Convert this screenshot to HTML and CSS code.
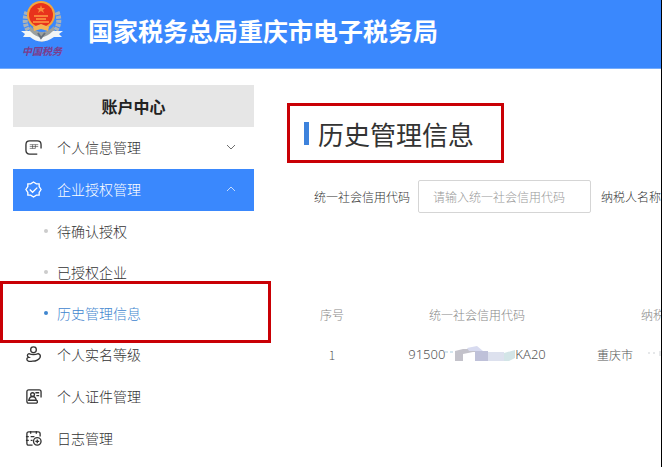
FILE: index.html
```html
<!DOCTYPE html>
<html lang="zh-CN">

<head>
    <meta charset="UTF-8">
    <meta name="viewport" content="width=device-width, initial-scale=1.0">
    <title>历史管理信息</title>
    <link rel="stylesheet" href="styles.css">
</head>

<body>
    <div class="page">
        <header class="header">
            <div class="logo">
                <svg width="44" height="44" viewBox="0 0 44 44" aria-hidden="true">
                    <path d="M7 12 Q2 24 11 34 M37 12 Q42 24 33 34" fill="none" stroke="#a9b2b8" stroke-width="5" stroke-dasharray="3 1" />
                    <path d="M10 26 Q22 38 34 26 L34 36 L22 42 L10 36 Z" fill="#9aa0a0" />
                    <circle cx="21" cy="15" r="14" fill="#f5a53c" />
                    <circle cx="21" cy="15" r="12" fill="#e8321c" />
                    <path d="M21 5 l1 3 h3 l-2 2 1 3 -3-2 -3 2 1-3 -2-2 h3z" fill="#f98a3a" />
                    <path d="M14 16 h14 M16 19 h10 M13 22 h16" stroke="#f9823a" stroke-width="2" />
                    <path d="M13 27 L21 24 L29 27 L28 31 L21 29 L14 31 Z" fill="#f3b455" />
                    <path d="M1 31 L10 31 Q21 43 33 31 L43 31 L39 34 L42 37 L34 37 Q21 46 10 37 L3 37 L5 34 Z" fill="#f2f5f6" />
                    <path d="M18 33 L21 38 L25 33" fill="none" stroke="#68717c" stroke-width="2" />
                </svg>
                <span class="logo-text">中国税务</span>
            </div>
            <h1 class="site-name">国家税务总局重庆市电子税务局</h1>
        </header>

        <div class="content">
            <nav class="sidebar">
                <h2 class="sidebar-title">账户中心</h2>
                <ul class="menu">
                    <li>
                        <button type="button" class="menu-item">
                            <svg class="icon" viewBox="0 0 18 18">
                                <path d="M13 16 H5 Q1 16 1 12 V6 Q1 2 5 2 H13 Q17 2 17 6 V10" />
                                <path class="thin" d="M5 6 H14 M5 8 H14 M5 10 H11 M8 6 V10 M11 6 V10" />
                            </svg>
                            <span>个人信息管理</span>
                            <svg class="arrow" viewBox="0 0 10 6"><path d="M1 1 L5 5 L9 1" /></svg>
                        </button>
                    </li>
                    <li>
                        <button type="button" class="menu-item active">
                            <svg class="icon" viewBox="0 0 18 18">
                                <path d="M9 1 L12 3 L15 3 L15 6 L17 9 L15 12 L15 15 L12 15 L9 17 L6 15 L3 15 L3 12 L1 9 L3 6 L3 3 L6 3 Z" />
                                <path d="M5 9 L8 12 L13 7" />
                            </svg>
                            <span>企业授权管理</span>
                            <svg class="arrow" viewBox="0 0 10 6"><path d="M1 5 L5 1 L9 5" /></svg>
                        </button>
                        <ul class="submenu">
                            <li><a href="#">待确认授权</a></li>
                            <li><a href="#">已授权企业</a></li>
                            <li class="current"><a href="#">历史管理信息</a></li>
                        </ul>
                    </li>
                    <li>
                        <button type="button" class="menu-item">
                            <svg class="icon" viewBox="0 0 18 18">
                                <circle cx="9" cy="4" r="3" />
                                <path d="M4 8 Q9 10 14 8 Q17 9 16 12 Q14 16 8 16 Q2 17 2 14 Q2 12 4 12 Q1 10 4 8" />
                            </svg>
                            <span>个人实名等级</span>
                        </button>
                    </li>
                    <li>
                        <button type="button" class="menu-item">
                            <svg class="icon" viewBox="0 0 18 18">
                                <path d="M13 16 H4 Q2 16 2 14 V4 Q2 2 4 2 H15 Q17 2 17 4 V10" />
                                <circle cx="8" cy="7" r="2" />
                                <path d="M4 13 Q5 9 8 9 Q11 9 12 13 Z M11 5 H15 M12 8 H15 M13 13 V16" />
                            </svg>
                            <span>个人证件管理</span>
                        </button>
                    </li>
                    <li>
                        <button type="button" class="menu-item">
                            <svg class="icon" viewBox="0 0 18 18">
                                <path d="M8 16 H4 Q2 16 2 14 V4 Q2 2 4 2 H14 Q16 2 16 4 V7 M6 1 V4 M12 1 V4 M1 7 H4 M1 11 H4 M6 7 H10 M6 11 H8" />
                                <circle cx="13" cy="12" r="4" />
                                <path d="M11 12 H15 M13 10 V14" />
                            </svg>
                            <span>日志管理</span>
                        </button>
                    </li>
                </ul>
            </nav>

            <main class="main">
                <div class="main-title">
                    <h2>历史管理信息</h2>
                </div>

                <form class="search">
                    <label for="creditCode">统一社会信用代码</label>
                    <input type="text" id="creditCode" name="creditCode" placeholder="请输入统一社会信用代码">
                    <label for="taxpayerName">纳税人名称</label>
                    <input type="text" id="taxpayerName" name="taxpayerName">
                </form>

                <table class="list">
                    <thead>
                        <tr>
                            <th class="col-index">序号</th>
                            <th class="col-code">统一社会信用代码</th>
                            <th class="col-name">纳税人名称</th>
                        </tr>
                    </thead>
                    <tbody>
                        <tr>
                            <td>1</td>
                            <td>
                                <div class="code">
                                    <span>91500</span>
                                    <svg class="mask" viewBox="0 0 70 18" aria-hidden="true">
                                        <path d="M0 6 h3 v2 h-3z M5 6 h3 v2 h-3z" fill="#d5e6ee" />
                                        <path d="M10 6 L18 4 H30 L34 7 H28 L18 9 V16 H10 Z" fill="#c3c2ca" />
                                        <path d="M22 3 L32 1 L38 6 H24 Z" fill="#d8dbf0" />
                                        <path d="M30 6 H43 V16 H30 Z" fill="#bfc1d9" />
                                        <path d="M43 7 H59 V16 H43 Z" fill="#dde1ee" />
                                        <path d="M59 8 L70 5 V13 L64 16 H59 Z" fill="#d3e5e7" />
                                    </svg>
                                    <span>KA20</span>
                                </div>
                            </td>
                            <td>
                                <div class="name">
                                    <span>重庆市</span>
                                    <svg class="dots" viewBox="0 0 14 10" aria-hidden="true">
                                        <path d="M0 3 h2 v2 h-2z M5 3 h2 v2 h-2z M11 2 h3 v5 h-3z" fill="#e6e8ea" />
                                    </svg>
                                </div>
                            </td>
                        </tr>
                    </tbody>
                </table>
            </main>
        </div>
    </div>
</body>

</html>
```

FILE: styles.css
```css
body {
    margin: 0;
    font-family: "Noto Sans CJK SC", sans-serif;
    font-size: 14px;
    font-weight: 300;
    color: #333;
    background-color: #fff;
}

* {
    box-sizing: border-box;
}

h1,
h2,
ul {
    margin: 0;
    padding: 0;
}

ul {
    list-style: none;
}

.page {
    min-height: 100vh;
    border-right: 1px solid #000;
    overflow: hidden;
}

/* header */
.header {
    display: flex;
    align-items: center;
    gap: 24px;
    height: 69px;
    padding: 0 20px;
    background-color: #3a88fd;
    border-bottom: 1px solid #75acfb;
}

.logo {
    display: flex;
    flex-direction: column;
    align-items: center;
    width: 44px;
    height: 69px;
}

.logo svg {
    flex-shrink: 0;
}

.logo-text {
    font-size: 10px;
    font-weight: bold;
    font-style: italic;
    line-height: 14px;
    color: #7d3c8c;
}

.site-name {
    padding-bottom: 8px;
    font-size: 25px;
    line-height: 36px;
    font-weight: bold;
    color: #fff;
    white-space: nowrap;
}

.content {
    display: flex;
    gap: 48px;
    padding: 16px 0 0 13px;
}

/* sidebar */
.sidebar {
    flex: 0 0 241px;
}

.sidebar-title {
    font-size: 16px;
    font-weight: bold;
    line-height: 42px;
    text-align: center;
    color: #222;
    background-color: #e6e6e6;
}

.menu-item {
    display: flex;
    align-items: center;
    gap: 15px;
    width: 100%;
    height: 42px;
    padding: 0 18px 2px 12px;
    border: none;
    background: none;
    font: inherit;
    color: #333;
    cursor: pointer;
}

.menu-item.active {
    color: #fff;
    background-color: #3a88fd;
}

.icon,
.arrow {
    fill: none;
    stroke: currentColor;
}

.icon {
    width: 17px;
    height: 17px;
    stroke-width: 1.4;
}

.icon .thin {
    stroke-width: 1;
    opacity: 0.6;
}

.arrow {
    width: 10px;
    height: 6px;
    margin-left: auto;
    opacity: 0.7;
}

.submenu li {
    position: relative;
}

.submenu a {
    display: flex;
    align-items: center;
    gap: 9px;
    height: 41px;
    padding: 0 0 2px 31px;
    color: #333;
    text-decoration: none;
}

.submenu a::before {
    content: "";
    width: 4px;
    height: 4px;
    border-radius: 50%;
    background-color: #ccc;
}

.submenu .current a {
    color: #3f86cf;
}

.submenu .current a::before {
    background-color: #3f86cf;
}

/* red frames round the important parts */
.submenu .current::after,
.main-title::after {
    content: "";
    position: absolute;
    border: 3px solid #c90005;
    pointer-events: none;
}

.submenu .current::after {
    top: -12px;
    right: -17px;
    bottom: -9px;
    left: -13px;
}

/* main */
.main {
    flex: 1;
    min-width: 0;
    padding-top: 29px;
}

.main-title {
    position: relative;
    display: flex;
    align-items: center;
    gap: 9px;
    width: max-content;
    height: 40px;
    padding-bottom: 2px;
    margin-left: 2px;
}

.main-title::before {
    content: "";
    width: 5px;
    height: 23px;
    background-color: #3d82dc;
}

.main-title::after {
    top: -11px;
    right: -30px;
    bottom: -9px;
    left: -17px;
}

.main-title h2 {
    font-size: 26px;
    font-weight: 400;
    color: #333;
}

.search {
    display: flex;
    align-items: center;
    margin: 26px 0 0 12px;
    font-size: 12px;
    white-space: nowrap;
}

.search label {
    margin-right: 8px;
}

.search input {
    flex: 0 0 173px;
    height: 33px;
    margin-right: 10px;
    padding: 0 14px;
    border: 1px solid #d5d5d5;
    border-radius: 2px;
    font: inherit;
}

.search input::placeholder {
    color: #999;
}

.list {
    width: 448px;
    margin-top: 81px;
    border-collapse: collapse;
    table-layout: fixed;
    font-size: 12px;
    text-align: center;
}

.list th,
.list td {
    height: 40px;
    padding: 0;
    white-space: nowrap;
}

.list th {
    font-weight: 300;
    color: #888;
}

.list td {
    color: #555;
}

.col-index {
    width: 60px;
}

.col-code {
    width: 230px;
}

.code {
    display: flex;
    align-items: center;
    justify-content: center;
    font-family: "Noto Sans", sans-serif;
    font-size: 13px;
}

.mask {
    width: 70px;
    height: 18px;
}

.name {
    display: flex;
    align-items: center;
    gap: 15px;
    padding-left: 5px;
}

.dots {
    width: 14px;
    height: 10px;
}
```
